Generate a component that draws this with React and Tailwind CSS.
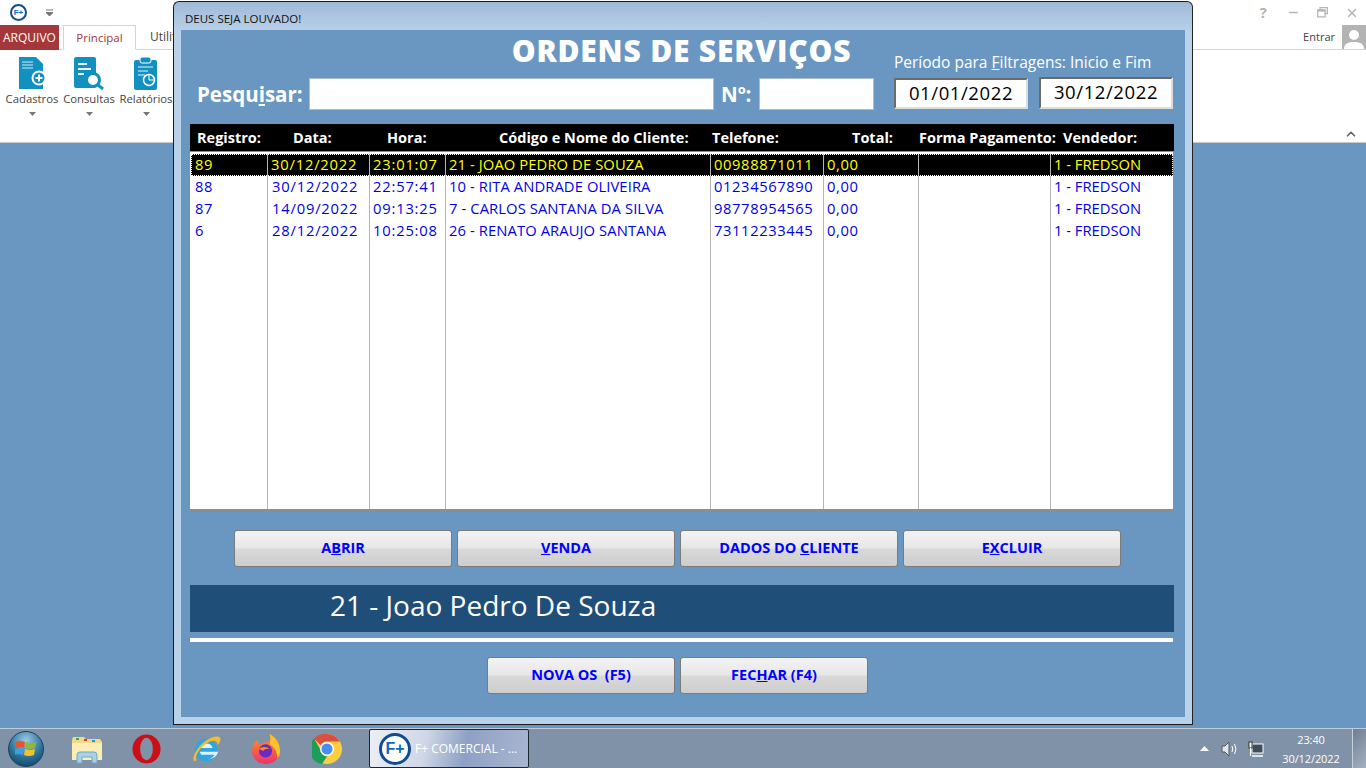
import { ChevronUp, Minus, X } from 'lucide-react'

const UI_FONT = "font-['Open_Sans',sans-serif]"
const ROWS = [
  ['89', '30/12/2022', '23:01:07', '21 - JOAO PEDRO DE SOUZA', '00988871011', '0,00', '', '1 - FREDSON'],
  ['88', '30/12/2022', '22:57:41', '10 - RITA ANDRADE OLIVEIRA', '01234567890', '0,00', '', '1 - FREDSON'],
  ['87', '14/09/2022', '09:13:25', '7 - CARLOS SANTANA DA SILVA', '98778954565', '0,00', '', '1 - FREDSON'],
  ['6', '28/12/2022', '10:25:08', '26 - RENATO ARAUJO SANTANA', '73112233445', '0,00', '', '1 - FREDSON'],
]
const COLS = 'grid grid-cols-[77px_102px_76px_265px_113px_95px_132px_1fr]'
const TRACKING = ['tracking-[0.6px]', 'tracking-[0.8px]', 'tracking-[0.8px]', 'tracking-[0.1px]', 'tracking-[0.6px]', 'tracking-[0.6px]', '', '']

function Logo({ size = 'w-[17px] h-[17px] text-[8px] border-2' }) {
  return (
    <div className={`${size} rounded-full border-[#0f4c94] bg-white flex items-center justify-center font-bold text-[#1167b8] font-['Liberation_Sans',sans-serif] leading-none shrink-0`}>
      F+
    </div>
  )
}

function RibbonBtn({ label, children, w }) {
  return (
    <div className={`${w} flex flex-col items-center`}>
      <div className="h-[34px] flex items-center justify-center">{children}</div>
      <span className="text-[11.3px] leading-[14px] mt-[2px] text-[#444] whitespace-nowrap">{label}</span>
      <svg width="7" height="4" className="mt-[6px]"><path d="M0 0h7L3.5 4z" fill="#777" /></svg>
    </div>
  )
}

function Btn({ w, children }) {
  return (
    <button className={`${w} h-[37px] pb-[2px] rounded-[3px] border border-[#7b7b7b] bg-[linear-gradient(#f3f3f3_0%,#e7e7e7_48%,#d9d9d9_52%,#cdcdcd_100%)] text-[#0000ff] font-bold text-[14.5px] whitespace-pre flex items-center justify-center font-['Open_Sans',sans-serif]`}>
      {children}
    </button>
  )
}

function Ribbon() {
  return (
    <div className={`h-[143px] bg-white border-b border-[#c9c9c9] ${UI_FONT} overflow-hidden`}>
      <div className="h-[25px] flex items-center pl-[10px] pr-[7px]">
        <Logo />
        <svg width="7" height="8" className="ml-[19px]"><path d="M0 1h7M0 3.5h7L3.5 7z" stroke="#777" fill="#777" /></svg>
        <div className="ml-auto flex items-center gap-[17px] text-[#b5b5b5]">
          <span className="font-bold text-[15px] leading-none mr-[3px]">?</span>
          <Minus size={13} strokeWidth={2.5} />
          <svg width="11" height="11" viewBox="0 0 11 11" fill="none" stroke="#b5b5b5" strokeWidth="1.3"><path d="M3 2.5V.7h7.3v6H8M.7 3h7.4v6.8H.7z" /><path d="M.7 3.6h7.4" strokeWidth="2" /></svg>
          <X size={14} strokeWidth={2.5} />
        </div>
      </div>
      <div className="h-[25px] flex border-b border-[#d4d4d4] text-[12px]">
        <div className="w-[59px] bg-[#a4373a] text-white flex items-center justify-center h-[25px]">ARQUIVO</div>
        <div className="ml-[4px] w-[73px] h-[25px] border border-b-white border-[#d4d4d4] text-[#a4373a] text-[11.5px] flex items-center justify-center">Principal</div>
        <div className="ml-[14px] text-[#444] flex items-center h-[24px]">Utilitários</div>
        <div className="ml-auto flex items-center text-[#444] text-[11px] h-[24px]">
          <span className="mr-[7px]">Entrar</span>
          <div className="w-[24px] h-[24px] bg-[#b3b3b3] flex items-end justify-center overflow-hidden">
            <svg width="22" height="22" viewBox="0 0 22 22" fill="#fff"><circle cx="11" cy="8" r="5" /><path d="M1 22c0-6 5-7 10-7s10 1 10 7z" /></svg>
          </div>
        </div>
      </div>
      <div className="flex pt-[6px] pl-[3px] gap-0 relative">
        <RibbonBtn label="Cadastros" w="w-[58px]">
          <svg width="30" height="33" viewBox="0 0 30 33">
            <path d="M2 0h17l7 7v25H2z" fill="#1290c0" />
            <path d="M5 5h11M5 8h11M5 11h11" stroke="#cfe9f3" />
            <circle cx="22" cy="21" r="6.5" fill="#1290c0" stroke="#fff" strokeWidth="2" />
            <path d="M18.5 21h7M22 17.5v7" stroke="#fff" strokeWidth="2" />
          </svg>
        </RibbonBtn>
        <RibbonBtn label="Consultas" w="w-[56px]">
          <svg width="32" height="33" viewBox="0 0 32 33">
            <rect x="1" y="0" width="22" height="31" rx="2" fill="#1290c0" />
            <path d="M5 7h9M5 12h13M5 17h6" stroke="#e6f4fa" strokeWidth="2" />
            <circle cx="20" cy="23" r="6.5" fill="#fff" stroke="#1290c0" strokeWidth="3" />
            <path d="M25 28l5 4" stroke="#1290c0" strokeWidth="3" />
          </svg>
        </RibbonBtn>
        <RibbonBtn label="Relatórios" w="w-[58px]">
          <svg width="24" height="33" viewBox="0 0 24 33">
            <rect x="0" y="3" width="23" height="30" rx="2" fill="#1290c0" />
            <rect x="6" y="0" width="11" height="6" rx="2" fill="#1290c0" stroke="#fff" />
            <path d="M4 10h15M4 14h10M4 18h7" stroke="#e6f4fa" />
            <circle cx="15" cy="23" r="5.5" fill="none" stroke="#fff" strokeWidth="1.5" />
            <path d="M15 23v-5M15 23h5" stroke="#fff" />
          </svg>
        </RibbonBtn>
        <ChevronUp size={14} strokeWidth={3} className="absolute right-[8px] top-[77px] text-[#666]" />
      </div>
    </div>
  )
}

function OsWindow() {
  return (
    <div className={`absolute left-[173px] top-[1px] w-[1020px] h-[724px] rounded-t-[6px] border border-[#1a1a1a] border-r-[#222] bg-[linear-gradient(#9fbad8_0px,#b9d1e9_30px,#b9d1e9_100%)] pl-[7px] pr-[7px] pb-[7px] flex flex-col ${UI_FONT}`}>
      <div className="h-[28px] shrink-0 pt-[9px] pl-[4px] text-[11.5px] leading-[16px] text-[#111]">DEUS SEJA LOUVADO!</div>
      <div className="flex-1 bg-[#6a97c2] flex flex-col pl-[9px] pr-[11px]">
        <div className="h-[94px] flex shrink-0">
          <div className="w-[704px] -ml-[9px] pl-[16px] flex flex-col">
            <div className="h-[48px] pb-[6px] flex items-center justify-center pl-[300px] text-white font-extrabold text-[30px] tracking-[0.8px] leading-none whitespace-nowrap">
              <span className="relative ml-[-19px]">ORDENS DE SERVIÇOS</span>
            </div>
            <div className="flex items-center h-[32px]">
              <label className="text-white font-bold text-[20.5px] w-[112px] whitespace-nowrap">Pesq<span>u</span><u>i</u>sar:</label>
              <div className="w-[405px] h-[32px] bg-white border border-[#a9bed3]" />
              <label className="ml-[7px] w-[38px] text-white font-bold text-[20.5px]">Nº:</label>
              <div className="w-[115px] h-[32px] bg-white border border-[#a9bed3]" />
            </div>
          </div>
          <div className="ml-[9px] flex flex-col">
            <div className="h-[47px] pt-[21px] text-white text-[15.5px] leading-[22px] whitespace-nowrap">Período para <u>F</u>iltragens: Inicio e Fim</div>
            <div className="flex gap-[11px] items-end">
              <div className="w-[134px] h-[31px] bg-white border-2 border-t-[#6b6b6b] border-l-[#6b6b6b] border-r-[#ddd] border-b-[#ddd] text-[18.5px] tracking-[0.6px] text-center leading-[26px] text-black">01/01/2022</div>
              <div className="w-[134px] h-[32px] bg-white border-2 border-t-[#6b6b6b] border-l-[#6b6b6b] border-r-[#ddd] border-b-[#ddd] text-[18.5px] tracking-[0.6px] text-center leading-[26px] text-black">30/12/2022</div>
            </div>
          </div>
        </div>

        <div className={`${COLS} w-[984px] h-[27px] bg-black text-white font-bold text-[14.5px] items-center whitespace-nowrap shrink-0`}>
          <span className="pl-[7px]">Registro:</span>
          <span className="pl-[26px]">Data:</span>
          <span className="pl-[18px]">Hora:</span>
          <span className="pl-[54px]">Código e Nome do Cliente:</span>
          <span className="pl-[2px]">Telefone:</span>
          <span className="pl-[29px]">Total:</span>
          <span className="pl-[1px]">Forma Pagamento:</span>
          <span className="pl-[13px]">Vendedor:</span>
        </div>

        <div className="relative mt-[1px] w-[983px] h-[359px] bg-white pt-[2px] shrink-0 overflow-hidden border-b-2 border-b-[#8d8d8d]">
          {ROWS.map((r, i) => (
            <div key={r[0]} className={`${COLS} ml-[1px] h-[22px] items-center text-[14.75px] whitespace-nowrap ${i === 0 ? 'bg-black text-[#ffff00] outline-1 outline-dotted outline-offset-[-1px] outline-white' : 'text-[#0000e6]'}`}>
              {r.map((c, j) => (
                <span key={j} className={`h-full border-r border-[#b5b5b5] leading-[21px] ${TRACKING[j]} ${j === 1 && i > 0 ? 'pl-[4px]' : j === 0 ? 'pl-[4px]' : 'pl-[3px]'} ${j === 7 ? 'border-r-0' : ''}`}>{c}</span>
              ))}
            </div>
          ))}
          <div className={`${COLS} absolute left-[1px] right-0 top-[90px] bottom-0`}>
            {[0, 1, 2, 3, 4, 5, 6].map(k => <span key={k} className="border-r border-[#b5b5b5]" />)}
          </div>
        </div>

        <div className="mt-[19px] flex gap-[5px] pl-[44px] shrink-0">
          <Btn w="w-[218px]"><span>A<u>B</u>RIR</span></Btn>
          <Btn w="w-[218px]"><span><u>V</u>ENDA</span></Btn>
          <Btn w="w-[218px]"><span>DADOS DO <u>C</u>LIENTE</span></Btn>
          <Btn w="w-[218px]"><span>E<u>X</u>CLUIR</span></Btn>
        </div>

        <div className="mt-[18px] w-[984px] h-[47px] bg-[#1f4e79] text-white text-[28px] leading-[40px] pl-[140px] shrink-0">21 - Joao Pedro De Souza</div>
        <div className="mt-[6px] w-[983px] h-[4px] bg-white shrink-0" />

        <div className="mt-[15px] flex gap-[5px] pl-[297px] shrink-0">
          <Btn w="w-[188px]"><span>NOVA OS  (F5)</span></Btn>
          <Btn w="w-[188px]"><span>FEC<u>H</u>AR (F4)</span></Btn>
        </div>
      </div>
    </div>
  )
}

function Orb() {
  return (
    <div className="w-[36px] h-[36px] rounded-full border border-[#1c3f5c] bg-[radial-gradient(circle_at_50%_25%,#9cc9e2,#2a7199_55%,#0e3550)] flex items-center justify-center">
      <svg width="22" height="20" viewBox="0 0 22 20">
        <path d="M1 3q4-2 9 0l-1 6q-4-2-9 0z" fill="#e8552d" />
        <path d="M11 3q4 2 10 0l-1 6q-5 2-10 0z" fill="#8cbb3c" />
        <path d="M0 10q4-2 9 0l-1 6q-4-2-9 0z" fill="#3b9fe0" />
        <path d="M10 10q5 2 10 0l-1 6q-5 2-10 0z" fill="#f5c02c" />
      </svg>
    </div>
  )
}

function Taskbar() {
  return (
    <div className={`absolute inset-x-0 bottom-0 h-[40px] bg-[#8092a8] border-t border-[#c0ccd9] flex items-center ${UI_FONT}`}>
      <div className="ml-[8px]"><Orb /></div>
      <svg className="ml-[27px]" width="32" height="30" viewBox="0 0 32 30">
        <path d="M1 6l1-3h11l2 2h14l2 3v18H1z" fill="#f1d98a" />
        <path d="M1 9h30v17H1z" fill="#fbeeb4" />
        <path d="M5 4h3v2H5z" fill="#3aa655" />
        <path d="M13 5h3v2h-3z" fill="#c9433a" />
        <path d="M21 6h3v2h-3z" fill="#2f8ed8" />
        <path d="M6 29v-8q0-3 3-3h14q3 0 3 3v8h-5v-6H11v6z" fill="#a9d1e6" stroke="#6fa8c7" />
      </svg>
      <svg className="ml-[29px]" width="29" height="30" viewBox="0 0 32 32">
        <ellipse cx="16" cy="16" rx="15.500" ry="16" fill="#cc0f16" />
        <ellipse cx="16" cy="16" rx="7" ry="12.500" fill="#8092a8" />
      </svg>
      <svg className="ml-[31px]" width="30" height="30" viewBox="0 0 32 32">
        <circle cx="15" cy="17" r="12" fill="#2ea6e0" />
        <path d="M9 15h13q-1-5-6.500-5T9 15z" fill="#dff3fb" />
        <path d="M8 19h20q-2 7-11 8 6-2 7-5H10z" fill="#dff3fb" />
        <path d="M2 29C-1 24 10 6 24 3c8-2 8 4 3 9C28 5 18 5 8 17 5 21 3 26 5 28z" fill="#f0bd2c" />
      </svg>
      <svg className="ml-[29px]" width="30" height="32" viewBox="0 0 32 32">
        <defs>
          <linearGradient id="fx" x1="0" y1="0" x2="0" y2="1">
            <stop offset="0" stopColor="#ff9a1f" />
            <stop offset="1" stopColor="#f0306a" />
          </linearGradient>
        </defs>
        <path d="M20 0c5 3 11 9 11 18a15 14 0 0 1-30 0C1 12 4 8 7 6c0 3 1 4 3 5 3-2 8-2 10-5 1-2 0-4 0-6z" fill="url(#fx)" />
        <path d="M20 0c5 3 11 9 11 18 0 4-1 6-3 8 0-7-3-12-8-15 1-4 1-8 0-11z" fill="#fcc12c" />
        <circle cx="15.500" cy="18" r="7" fill="#6a2bc4" />
        <path d="M8.500 16c3-3 8-3 12 0-3-1-7 0-7 2z" fill="#ff8a1f" />
      </svg>
      <svg className="ml-[31px]" width="30" height="30" viewBox="0 0 30 30">
        <circle cx="15" cy="15" r="15" fill="#ffcd40" />
        <path d="M15 0a15 15 0 0 1 13 7.500H15a7.500 7.500 0 0 0-6.500 3.750L2 4.500A15 15 0 0 1 15 0z" fill="#d9503f" />
        <path d="M2 4.500l6.500 11.250A7.500 7.500 0 0 0 15 22.500L10 30A15 15 0 0 1 2 4.500z" fill="#1e9d58" />
        <circle cx="15" cy="15" r="7" fill="#fff" />
        <circle cx="15" cy="15" r="5.500" fill="#4a8af4" />
      </svg>
      <div className="ml-[27px] w-[160px] h-[39px] rounded-[2px] border border-[#20262e] bg-[linear-gradient(100deg,#eceff4_0%,#cfd7e6_35%,#8ea0c4_60%,#a9b6d0_100%)] flex items-center pl-[9px]">
        <Logo size="w-[32px] h-[32px] text-[16px] border-[3px]" />
        <span className="ml-[4px] text-white text-[12px] whitespace-nowrap">F+ COMERCIAL - ...</span>
      </div>
      <div className="ml-auto flex items-center">
        <svg width="9" height="5"><path d="M0 5l4.500-5L9 5z" fill="#fff" /></svg>
        <svg className="ml-[12px]" width="17" height="16" viewBox="0 0 17 16" fill="none" stroke="#fff">
          <path d="M1 5h3l4-4v14l-4-4H1z" fill="#dfe5ec" stroke="#555" />
          <path d="M11 5q1.500 3 0 6M13.500 3q3 5 0 10" />
        </svg>
        <svg className="ml-[10px]" width="16" height="16" viewBox="0 0 16 16">
          <rect x="4" y="3" width="11" height="9" fill="#3d4d5c" stroke="#fff" />
          <path d="M4 15h11" stroke="#fff" strokeWidth="1.500" />
          <rect x="1" y="1" width="3" height="6" fill="#fff" stroke="#333" />
          <path d="M2.500 7v8" stroke="#fff" />
        </svg>
        <div className="ml-[17px] w-[60px] text-center text-white text-[11px] leading-[19px] tracking-[-0.1px]">
          <div>23:40</div>
          <div>30/12/2022</div>
        </div>
        <div className="ml-[11px] w-[14px] h-[39px] bg-[linear-gradient(135deg,#6f7f92,#a4b0bf)] border-l border-[#c8d0da]" />
      </div>
    </div>
  )
}

export default function App() {
  return (
    <div className="relative w-[1366px] h-[768px] bg-[#6a97c2] overflow-hidden">
      <Ribbon />
      <OsWindow />
      <Taskbar />
    </div>
  )
}
